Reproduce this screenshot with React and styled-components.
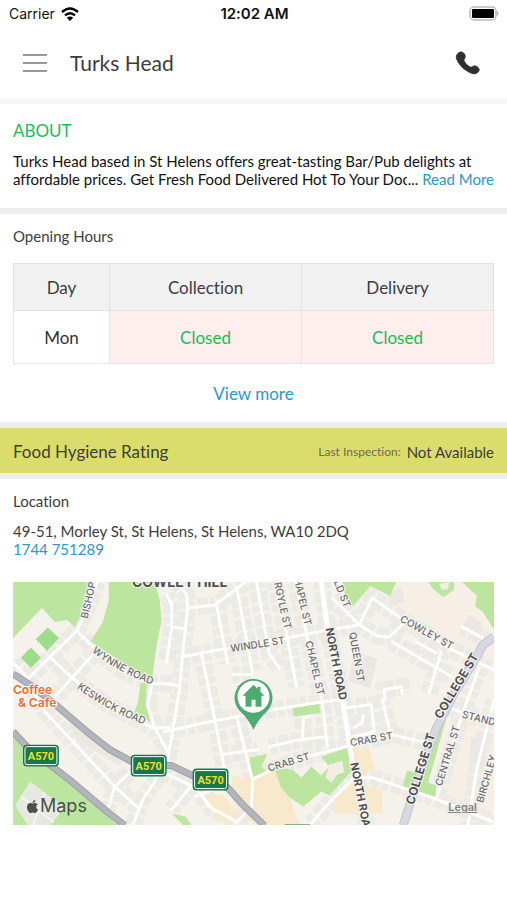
import React from 'react';
import styled, { createGlobalStyle } from 'styled-components';
import { FaApple } from 'react-icons/fa';

const GlobalStyle = createGlobalStyle`
  * { box-sizing: border-box; }
  body {
    margin: 0;
    background: #fff;
    font-family: Lato, "Open Sans", sans-serif;
    font-variant-ligatures: none;
    color: #3d3d3d;
  }
  h1, h2, p, address { margin: 0; font-weight: 400; font-style: normal; }
  a { color: #2b97cb; text-decoration: none; }
  button { border: 0; background: none; padding: 0; font: inherit; cursor: pointer; }
`;

const Page = styled.div`
  min-height: 100vh;
  background: #fff;
`;

const StatusBar = styled.div`
  display: grid;
  grid-template-columns: 1fr auto 1fr;
  align-items: center;
  height: 27px;
  padding: 0 7px 0 9px;
  font-family: Inter, sans-serif;
  font-size: 14px;
  color: #111;
`;

const Carrier = styled.div`
  display: flex;
  align-items: center;
  gap: 6px;
`;

const Clock = styled.div`
  font-size: 15px;
  font-weight: 600;
`;

const BatteryIcon = styled.svg`
  justify-self: end;
`;

const NavBar = styled.header`
  display: flex;
  align-items: center;
  height: 71px;
  padding: 0 26px 0 23px;
`;

const IconButton = styled.button`
  display: flex;
  color: #303030;
`;

const Title = styled.h1`
  flex: 1;
  margin-left: 23px;
  font-size: 21px;
  line-height: 28px;
`;

const Divider = styled.div`
  height: 6px;
  background: ${(p) => (p.$soft ? '#f6f6f6' : '#eeeeee')};
`;

const Section = styled.section`
  padding: ${(p) => p.$pad};
`;

const AboutHeading = styled.h2`
  font-size: 17px;
  line-height: 20px;
  color: #1dba5a;
`;

const SubHeading = styled.h2`
  font-size: 15px;
  line-height: 18px;
`;

const Summary = styled.div`
  position: relative;
  height: 36px;
  margin-top: 11px;
  overflow: hidden;
  font-size: 15px;
  line-height: 18px;
  color: #111;
`;

const ReadMore = styled.span`
  position: absolute;
  right: 0;
  bottom: 0;
  padding-left: 1px;
  background: #fff;
`;

const HoursTable = styled.table`
  width: 100%;
  margin-top: 18px;
  border-collapse: collapse;
  table-layout: fixed;
  font-size: 17px;
  line-height: 22px;
  text-align: center;
`;

const HeadCell = styled.th`
  width: ${(p) => p.$width};
  height: 47px;
  padding: 2px 0 0;
  border: 1px solid #e2e2e2;
  background: #f1f1f1;
  font-weight: 400;
`;

const BodyCell = styled.td`
  height: 53px;
  padding: 2px 0 0;
  border: 1px solid #e6e4e4;
  background: ${(p) => (p.$closed ? '#feefee' : '#fff')};
  color: ${(p) => (p.$closed ? '#1dba5a' : '#333')};
`;

const ViewMore = styled.a`
  display: block;
  margin-top: 19px;
  font-size: 17px;
  line-height: 22px;
  text-align: center;
`;

const Hygiene = styled.section`
  display: flex;
  align-items: center;
  height: 45px;
  padding: 2px 13px 0;
  background: #dadd6c;
`;

const HygieneTitle = styled.h2`
  flex: 1;
  font-size: 17px;
  line-height: 22px;
`;

const InspectionLabel = styled.span`
  margin-right: 6px;
  font-size: 12px;
  color: #6e6e47;
`;

const Inspection = styled.span`
  font-size: 15px;
`;

const Address = styled.address`
  margin-top: 12px;
  font-size: 15px;
  line-height: 18px;
`;

const MapFrame = styled.div`
  position: relative;
  margin-top: 24px;
`;

const MapDrawing = styled.svg`
  display: block;
  width: 100%;
  height: auto;
  font-family: Inter, sans-serif;
`;

const MapBrand = styled.div`
  position: absolute;
  left: 12px;
  bottom: 8px;
  display: flex;
  align-items: center;
  font-family: Inter, sans-serif;
  font-size: 18px;
  line-height: 22px;
  color: #4a4f49;
`;

const Legal = styled.a`
  position: absolute;
  right: 17px;
  bottom: 10px;
  font-family: Inter, sans-serif;
  font-size: 11px;
  line-height: 16px;
  font-weight: 600;
  color: #85837f;
  text-decoration: underline;
`;

const PARKS = [
  '13,582 90,582 82,613 75,627 67,620 55,622 42,608 13,638',
  '109,582 155,582 160,600 162,620 157,645 152,682 145,680 125,664 103,650 91,641 103,622 109,600',
  '48,628 59,638 47,651 36,639',
  '31,648 41,658 31,668 21,658',
  '13,736 50,768 80,792 118,826 13,826',
  '141,683 147,684 146,705 151,722 134,714 138,703',
  '172,814 186,817 192,826 184,826',
  '293,708 320,704 321,713 294,717',
  '250,758 268,754 262,767 267,772 252,778',
  '275,768 293,770 302,778 312,767 322,776 330,767 322,757 348,748 352,772 330,796 322,792 304,807 290,798 281,787',
  '343,582 397,582 391,596 371,586 354,606 347,602',
  '429,582 455,582 455,590 444,597 434,589',
  '463,582 495,582 495,630 489,620 484,612 476,606 478,596',
  '445,711 450,709 429,783 437,786 436,800 403,788 408,771 424,775',
];

const SHOPS = [
  '232,776 252,780 278,770 290,798 300,826 255,826 232,800',
  '208,797 222,795 238,812 232,826 218,820 206,806',
  '353,747 370,750 376,768 366,776 355,776',
  '350,782 382,790 384,814 335,814 336,800',
];

const STREETS = [
  '97,582 89,605 77,631 50,657 28,679',
  '77,631 91,645 120,670 152,684 172,684',
  '50,657 72,678 106,704 153,728 170,728',
  '93,655 72,678 55,697',
  '13,663 24,674 45,712 115,787 138,808',
  '108,810 115,787 130,773',
  '161,766 155,782 143,800 133,826',
  '152,684 148,706 155,728 168,752',
  '178,582 187,595 188,608 183,655 180,688 175,720 168,760',
  '188,608 215,605 245,583',
  '217,605 228,663',
  '237,587 253,672',
  '257,582 270,655 280,668',
  '182,657 230,648 288,638 328,630 360,625',
  '202,655 212,703 225,770',
  '275,582 288,638 297,687',
  '296,582 308,638 323,702 328,748',
  '167,595 172,604 172,627 167,662',
  '172,627 186,629',
  '165,684 180,686',
  '233,675 252,675',
  '165,732 205,723 237,717 273,710 323,702 343,700',
  '270,747 300,740 328,737',
  '303,740 304,718 308,717',
  '222,755 258,750',
  '237,717 253,780 252,807 237,823',
  '253,780 272,770 308,757 335,750 350,746 393,735 427,743',
  '312,824 330,803 355,778 373,778 436,799 493,822',
  '450,708 470,716 497,722',
  '480,668 463,715 437,800',
  '495,700 478,768 469,826',
  '333,598 360,625 378,636 390,637 405,623',
  '360,625 373,598 400,617 453,650 495,670',
  '393,642 453,677',
  '417,642 437,653',
  '442,652 430,693',
  '463,627 487,640',
  '386,700 385,690 402,687 403,694',
  '347,708 372,705 375,732 350,738',
  '355,728 363,722 364,716',
  '383,700 392,737',
  '165,773 195,788 215,812',
  '172,810 192,786',
  '195,797 214,790',
  '208,806 238,823',
];

const ARTERIALS = ['322,582 328,628 343,700 353,763 368,826'];

const HIGHWAYS = [
  '13,674 33,687 58,707 87,732 110,750 132,762 149,766 172,766 195,777 228,788 245,807 265,826',
  '13,732 28,748 50,765 73,783 107,812 125,826',
];

const COLLEGE = '495,637 484,645 477,658 456,692 437,729 420,775 404,826';

const LABELS = [
  { text: 'BISHOP', x: 88, y: 600, angle: -77, size: 10 },
  { text: 'WINDLE ST', x: 258, y: 644, angle: -9, size: 10 },
  { text: 'ARGYLE ST', x: 283, y: 602, angle: 77, size: 10 },
  { text: 'CHAPEL ST', x: 303, y: 598, angle: 77, size: 10 },
  { text: 'CHAPEL ST', x: 316, y: 668, angle: 77, size: 10 },
  { text: 'QUEEN ST', x: 358, y: 657, angle: 80, size: 10 },
  { text: 'OLD ST', x: 342, y: 590, angle: 68, size: 10 },
  { text: 'COWLEY ST', x: 428, y: 632, angle: 29, size: 10 },
  { text: 'CRAB ST', x: 289, y: 762, angle: -17, size: 10 },
  { text: 'CRAB ST', x: 372, y: 739, angle: -10, size: 10 },
  { text: 'CENTRAL ST', x: 448, y: 756, angle: -73, size: 10 },
  { text: 'BIRCHLEY', x: 487, y: 779, angle: -74, size: 10 },
  { text: 'STAND', x: 480, y: 718, angle: 14, size: 10 },
  { text: 'NORTH ROAD', x: 337, y: 664, angle: 79, size: 11, bold: true },
  { text: 'NORTH ROAD', x: 362, y: 799, angle: 79, size: 11, bold: true },
  { text: 'COLLEGE ST', x: 457, y: 686, angle: -59, size: 12, bold: true },
  { text: 'COLLEGE ST', x: 421, y: 769, angle: -73, size: 12, bold: true },
  { text: 'COWLEY HILL', x: 180, y: 581, angle: 0, size: 14, bold: true },
];

const SHIELDS = [
  [41, 756],
  [149, 766],
  [211, 780],
];

function RoadShield({ x, y }) {
  return (
    <g>
      <rect x={x - 18} y={y - 11} width="36" height="22" rx="4" fill="#16794a" />
      <rect x={x - 16} y={y - 9} width="32" height="18" rx="2" fill="#16794a" stroke="#fff" />
      <text x={x} y={y + 4} textAnchor="middle" fontSize="11" fontWeight="700" fontFamily="Roboto, sans-serif" fill="#f6df25">A570</text>
    </g>
  );
}

function StreetMap() {
  return (
    <MapDrawing viewBox="13 582 482 244" role="img" aria-label="Map of the area around Morley St, St Helens">
      <rect x="13" y="582" width="482" height="244" fill="#f5f2eb" />
      <g fill="#f7efe6">
        <polygon points="397,582 463,582 478,600 476,606 495,636 495,665 400,614 373,596 391,596" />
        <polygon points="455,705 495,720 495,826 437,800" />
      </g>
      <g fill="none" stroke="#eceae5" strokeWidth="17" strokeDasharray="7 3 11 2">
        {STREETS.map((points) => <polyline key={points} points={points} />)}
        {ARTERIALS.map((points) => <polyline key={points} points={points} />)}
      </g>
      <g fill="#ebe8e3">
        <polygon points="66,718 84,725 128,758 119,766 77,740" />
        <polygon points="472,737 488,742 484,769 470,764" />
        <polygon points="388,593 402,588 406,602 394,605" />
        <polygon points="470,615 484,623 478,636 464,628" />
        <polygon points="355,652 378,659 371,689 349,681" />
      </g>
      <g fill="#f8e8cc">{SHOPS.map((points) => <polygon key={points} points={points} />)}</g>
      <g fill="#bce69f">{PARKS.map((points) => <polygon key={points} points={points} />)}</g>
      <polygon points="330,765 343,761 345,773 338,775 332,783 326,778" fill="#f1eee6" />
      <polygon points="440,584 450,582 449,589 443,590" fill="#f1eee6" />
      <g fill="#9fdc8b">
        <polygon points="48,628 59,638 47,651 36,639" />
        <polygon points="31,648 41,658 31,668 21,658" />
      </g>
      <polygon points="30,782 65,808 50,826 28,826 15,806" fill="#e6e9e1" />
      <path d="M21 797 54 823M45 793 33 826" stroke="#f3f6ee" strokeWidth="2" />
      <g fill="none" stroke="#fff" strokeWidth="3" strokeLinejoin="round" strokeLinecap="round">
        {STREETS.map((points) => <polyline key={points} points={points} />)}
      </g>
      <g fill="none" stroke="#fff" strokeWidth="5">
        {ARTERIALS.map((points) => <polyline key={points} points={points} />)}
      </g>
      <polyline points={COLLEGE} fill="none" stroke="#c2c5d2" strokeWidth="9" />
      <polyline points={COLLEGE} fill="none" stroke="#d6d8e2" strokeWidth="7" />
      <g fill="none" strokeLinejoin="round">
        {HIGHWAYS.map((points) => <polyline key={points} points={points} stroke="#9fa0a5" strokeWidth="7" />)}
        {HIGHWAYS.map((points) => <polyline key={`${points}-fill`} points={points} stroke="#b3b5bc" strokeWidth="5" />)}
      </g>
      <defs>
        <path id="wynne" d="M92 652Q119 673 156 686" />
        <path id="keswick" d="M77 688Q107 711 150 727" />
      </defs>
      <g fill="#6c6c6e" stroke="#f8f6f1" strokeWidth="2" paintOrder="stroke" fontWeight="500">
        {LABELS.map(({ text, x, y, angle, size, bold }) => (
          <text
            key={`${text}-${x}`}
            transform={`translate(${x} ${y}) rotate(${angle})`}
            textAnchor="middle"
            dominantBaseline="central"
            fontSize={size}
            fontWeight={bold ? 700 : 500}
            fill={bold ? '#505052' : '#6c6c6e'}
          >
            {text}
          </text>
        ))}
        <text fontSize="10"><textPath href="#wynne">WYNNE ROAD</textPath></text>
        <text fontSize="10"><textPath href="#keswick">KESWICK ROAD</textPath></text>
      </g>
      <g fill="#ee7038" stroke="#fff" strokeWidth="2" paintOrder="stroke" fontSize="12" fontWeight="700">
        <text x="13" y="694">Coffee</text>
        <text x="18" y="707">&amp; Cafe</text>
      </g>
      {SHIELDS.map(([x, y]) => <RoadShield key={x} x={x} y={y} />)}
      <rect x="284" y="825" width="28" height="4" rx="2" fill="#16794a" />
      <g>
        <path d="M254 730Q249 719 240 711A19 19 0 1 1 268 711Q259 719 254 730Z" fill="#4daa70" />
        <circle cx="254" cy="697" r="16" fill="#fff" />
        <path d="M254 685 243 696H246V707H252V700H256V707H262V696H265L261 692V687H258V689Z" fill="#4daa70" />
      </g>
    </MapDrawing>
  );
}

const ABOUT =
  'Turks Head based in St Helens offers great-tasting Bar/Pub delights at affordable prices. Get Fresh Food Delivered Hot To Your Doorstep.';

export default function App() {
  return (
    <Page>
      <GlobalStyle />
      <StatusBar>
        <Carrier>
          Carrier
          <svg width="18" height="14" viewBox="0 0 18 14" fill="none" stroke="#000" strokeWidth="2.4" aria-hidden="true">
            <path d="M1 5Q9-2 17 5" />
            <path d="M4 8.400Q9 4 14 8.400" />
            <path d="M9 14 5.800 10.800Q9 8.200 12.200 10.800Z" fill="#000" stroke="none" />
          </svg>
        </Carrier>
        <Clock>12:02 AM</Clock>
        <BatteryIcon width="31" height="16" viewBox="0 0 31 16" aria-hidden="true">
          <rect x="1" y="1" width="26" height="13" rx="4" fill="#fff" stroke="#bbb" strokeWidth="1.500" />
          <rect x="3" y="3" width="22" height="9" rx="1" fill="#000" />
          <path d="M28 5Q31 7.500 28 10Z" fill="#aaa" />
        </BatteryIcon>
      </StatusBar>
      <NavBar>
        <IconButton aria-label="Menu">
          <svg width="24" height="20" viewBox="0 0 24 20" stroke="#777" strokeWidth="1.500" aria-hidden="true">
            <path d="M0 2H24M0 10H24M0 18H24" />
          </svg>
        </IconButton>
        <Title>Turks Head</Title>
        <IconButton aria-label="Call">
          <svg width="26" height="26" viewBox="0 0 26 26" fill="currentColor" stroke="currentColor" strokeLinejoin="round" aria-hidden="true">
            <path d="M3 3.400C4.700 1.600 7.500 1.500 9 3.600C10.500 5.600 10.500 7.300 9.400 8.900C8.600 10 8.900 10.800 9.900 12.200C11.200 14.200 12.600 15.600 14.200 16.600C15.600 17.500 16.500 17.400 17.600 16.600C19 15.600 20.600 15.700 22.400 17C24.500 18.500 24.700 20.300 23 22C21.200 23.900 18.900 24.300 16 23C9.200 20 4.100 15 1.800 9.200C0.900 6.900 1.300 5.200 3 3.400Z" />
          </svg>
        </IconButton>
      </NavBar>
      <Divider $soft />
      <Section $pad="17px 13px 20px">
        <AboutHeading>ABOUT</AboutHeading>
        <Summary>
          <p>{ABOUT}</p>
          <ReadMore>... <a href="#about">Read More</a></ReadMore>
        </Summary>
      </Section>
      <Divider />
      <Section $pad="13px 13px 17px">
        <SubHeading>Opening Hours</SubHeading>
        <HoursTable>
          <thead>
            <tr>
              <HeadCell scope="col" $width="20%">Day</HeadCell>
              <HeadCell scope="col" $width="40%">Collection</HeadCell>
              <HeadCell scope="col" $width="40%">Delivery</HeadCell>
            </tr>
          </thead>
          <tbody>
            <tr>
              <BodyCell>Mon</BodyCell>
              <BodyCell $closed>Closed</BodyCell>
              <BodyCell $closed>Closed</BodyCell>
            </tr>
          </tbody>
        </HoursTable>
        <ViewMore href="#hours">View more</ViewMore>
      </Section>
      <Divider />
      <Hygiene>
        <HygieneTitle>Food Hygiene Rating</HygieneTitle>
        <InspectionLabel>Last Inspection:</InspectionLabel>
        <Inspection>Not Available</Inspection>
      </Hygiene>
      <Divider />
      <Section $pad="13px 13px 24px">
        <SubHeading>Location</SubHeading>
        <Address>
          49-51, Morley St, St Helens, St Helens, WA10 2DQ
          <br />
          <a href="tel:1744751289">1744 751289</a>
        </Address>
        <MapFrame>
          <StreetMap />
          <MapBrand><FaApple size={15} aria-hidden="true" />Maps</MapBrand>
          <Legal href="#legal">Legal</Legal>
        </MapFrame>
      </Section>
    </Page>
  );
}
